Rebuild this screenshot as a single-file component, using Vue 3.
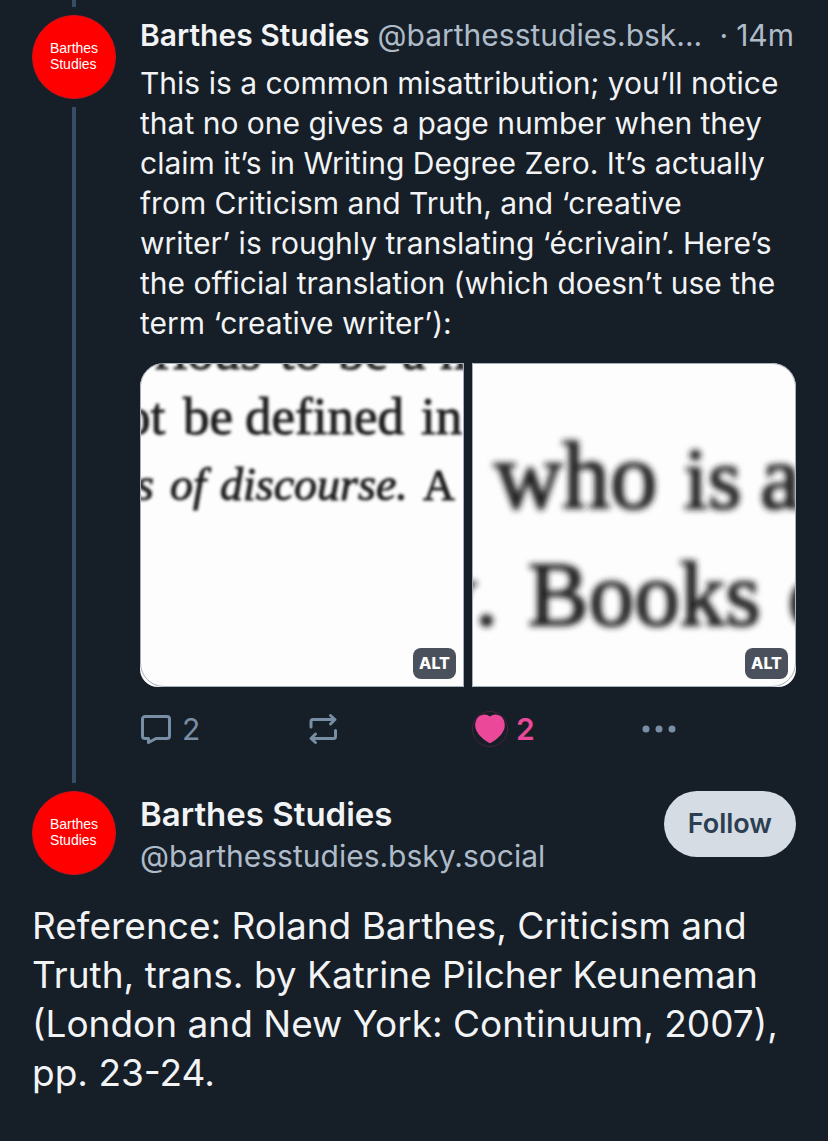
<script setup>
import { ref } from 'vue'

const name = 'Barthes Studies'
const handle = '@barthesstudies.bsky.social'
const liked = ref(true)
const scans = [
  {
    id: 'scan-left',
    alt: 'Scanned passage: not be defined in terms of discourse. A',
    blur: 1.5,
    stroke: 1,
    words: [
      { x: 15, y: 6, size: 53, text: 'rious' },
      { x: 140, y: 6, size: 53, text: 'to' },
      { x: 198, y: 6, size: 53, text: 'be' },
      { x: 262, y: 6, size: 53, text: 'a' },
      { x: 300, y: 6, size: 53, text: 'n' },
      { x: -16, y: 71, size: 53, text: 'ot' },
      { x: 43, y: 71, size: 53, text: 'be' },
      { x: 105, y: 71, size: 53, text: 'defined' },
      { x: 281, y: 71, size: 53, text: 'in' },
      { x: -4, y: 137, size: 46, text: 's', italic: true },
      { x: 30, y: 137, size: 46, text: 'of', italic: true },
      { x: 80, y: 137, size: 46, text: 'discourse.', italic: true },
      { x: 283, y: 137, size: 44, text: 'A' },
    ],
  },
  {
    id: 'scan-right',
    alt: 'Scanned passage: who is a. Books',
    blur: 3,
    stroke: 2,
    words: [
      { x: 22, y: 145, size: 95, text: 'who' },
      { x: 212, y: 145, size: 86, text: 'is' },
      { x: 288, y: 145, size: 92, text: 'a' },
      { x: -42, y: 262, size: 92, text: 'y' },
      { x: 3, y: 262, size: 92, text: '.' },
      { x: 56, y: 262, size: 91, text: 'Books' },
      { x: 316, y: 262, size: 91, text: 'o' },
    ],
  },
]
</script>

<template>
  <main class="thread">
    <article class="post">
      <div class="rail">
        <span class="line line-top"></span>
        <a class="avatar" href="#" aria-label="Barthes Studies profile"><span>Barthes<br>Studies</span></a>
        <span class="line line-rest"></span>
      </div>
      <div class="content">
        <header class="byline">
          <a class="name" href="#">{{ name }}</a>
          <a class="handle" href="#">@barthesstudies.bsk...</a>
          <span class="dot">·</span>
          <time class="time">14m</time>
        </header>
        <p class="text">This is a common misattribution; you’ll notice that no one gives a page number when they claim it’s in Writing Degree Zero. It’s actually from Criticism and Truth, and ‘creative<br>writer’ is roughly translating ‘écrivain’. Here’s the official translation (which doesn’t use the<br>term ‘creative writer’):</p>
        <div class="gallery">
          <figure v-for="scan in scans" :key="scan.id" class="scan">
            <svg viewBox="0 0 324 324" preserveAspectRatio="xMidYMid slice" role="img" :aria-label="scan.alt">
              <defs>
                <filter :id="scan.id" x="-20%" y="-20%" width="140%" height="140%">
                  <feGaussianBlur :stdDeviation="scan.blur" />
                </filter>
              </defs>
              <g :filter="`url(#${scan.id})`" class="ink" :stroke-width="scan.stroke">
                <text
                  v-for="(w, i) in scan.words"
                  :key="i"
                  :x="w.x"
                  :y="w.y"
                  :font-size="w.size"
                  :font-style="w.italic ? 'italic' : 'normal'"
                >{{ w.text }}</text>
              </g>
            </svg>
            <button class="alt" type="button">ALT</button>
          </figure>
        </div>
        <div class="actions">
          <button class="action" type="button" aria-label="Reply">
            <svg class="icon" viewBox="0 0 32 32"><path d="M5 3.500h22a2.500 2.500 0 0 1 2.500 2.500v17a2.500 2.500 0 0 1-2.500 2.500H16l-7.500 4v-4H5A2.500 2.500 0 0 1 2.500 23V6A2.500 2.500 0 0 1 5 3.500z" /></svg>
            <span>2</span>
          </button>
          <button class="action" type="button" aria-label="Repost">
            <svg class="icon" viewBox="0 0 32 32"><path d="M5 14V8.500a2 2 0 0 1 2-2H29M24.500 2.500l4.500 4-4.500 4.500M29.500 17.500v6a2 2 0 0 1-2 2H5.500M9.500 21l-4.500 4.500 4.500 4" /></svg>
          </button>
          <button class="action like" type="button" aria-label="Like" :aria-pressed="liked" @click="liked = !liked">
            <svg class="heart" viewBox="0 0 36 36"><circle cx="18" cy="18" r="17.500" /><path d="M18 5.500C21 3 25 2.800 28.500 5C32 7.500 33.500 12.500 32.500 17C31 23.500 24.500 28.500 19.500 31.500Q18 32.500 16.500 31.500C11.500 28.500 5 23.500 3.500 17C2.500 12.500 4 7.500 7.500 5C11 2.800 15 3 18 5.500z" /></svg>
            <span>2</span>
          </button>
          <button class="action" type="button" aria-label="More options">
            <svg class="dots" viewBox="0 0 40 32"><circle cx="8" cy="16" r="3.500" /><circle cx="21" cy="16" r="3.500" /><circle cx="34" cy="16" r="3.500" /></svg>
          </button>
        </div>
      </div>
    </article>

    <article>
      <header class="focus-head">
        <a class="avatar" href="#" aria-label="Barthes Studies profile"><span>Barthes<br>Studies</span></a>
        <div class="who">
          <a class="name big" href="#">{{ name }}</a>
          <a class="handle" href="#">{{ handle }}</a>
        </div>
        <button class="follow" type="button">Follow</button>
      </header>
      <p class="focus-text">Reference: Roland Barthes, Criticism and Truth, trans. by Katrine Pilcher Keuneman (London and New York: Continuum, 2007), pp. 23-24.</p>
    </article>
  </main>
</template>

<style>
body {
  background: #161e27;
}
</style>

<style scoped>
.thread {
  box-sizing: border-box;
  min-height: 100vh;
  padding: 0 32px 40px;
  background: #161e27;
  color: #f1f3f5;
  font-family: Inter, "Liberation Sans", sans-serif;
  font-size: 30px;
  line-height: 40px;
}
a {
  color: inherit;
  text-decoration: none;
}
button {
  padding: 0;
  border: 0;
  background: none;
  color: inherit;
  font: inherit;
  cursor: pointer;
}
p,
figure {
  margin: 0;
}
.post {
  display: flex;
  gap: 24px;
}
.rail {
  display: flex;
  flex-direction: column;
  align-items: center;
  gap: 8px;
  padding-bottom: 8px;
}
.line {
  width: 4px;
  background: #384d65;
}
.line-top {
  height: 7px;
}
.line-rest {
  flex: 1;
}
.avatar {
  display: flex;
  flex: none;
  box-sizing: border-box;
  align-items: center;
  justify-content: center;
  width: 84px;
  height: 84px;
  border: 1px solid #d01218;
  border-radius: 50%;
  background: #fe0000;
  color: #fff;
  font: 14px/16px "Liberation Sans", Arial, sans-serif;
}
.avatar span {
  padding-bottom: 2px;
}
.content {
  flex: 1;
  min-width: 0;
  padding-top: 15px;
}
.byline {
  display: flex;
  gap: 8px;
  padding: 0 2px 8px 0;
  white-space: nowrap;
}
.name {
  font-weight: 600;
}
.handle,
.dot,
.time {
  color: #aebbc9;
}
.byline .handle {
  overflow: hidden;
  text-overflow: ellipsis;
}
.dot {
  margin-left: auto;
}
.gallery {
  display: grid;
  grid-template-columns: 1fr 1fr;
  gap: 8px;
  padding-top: 20px;
}
.scan {
  position: relative;
  aspect-ratio: 1;
  overflow: hidden;
  background: #fdfdfd;
}
.scan::after {
  position: absolute;
  inset: 0;
  border: 1px solid #a4b0bd;
  content: "";
  pointer-events: none;
}
.scan:first-child {
  border-radius: 24px 0 0 18px;
}
.scan:last-child {
  border-radius: 0 24px 18px 0;
}
.scan:first-child::after {
  border-radius: 24px 0 0 24px;
}
.scan:last-child::after {
  border-radius: 0 24px 24px 0;
}
.scan svg {
  display: block;
  width: 100%;
  height: 100%;
}
.ink {
  fill: #1c1c1c;
  stroke: #1c1c1c;
  font-family: "Liberation Serif", "Times New Roman", serif;
}
.alt {
  position: absolute;
  right: 8px;
  bottom: 8px;
  width: 43px;
  height: 31px;
  border-radius: 8px;
  background: #4a515c;
  color: #fff;
  font-size: 16px;
  font-weight: 800;
  line-height: 31px;
}
.actions {
  display: grid;
  grid-template-columns: repeat(3, 1fr) 158px;
  align-items: center;
  padding: 22px 0 42px;
  color: #788ea5;
}
.action {
  display: flex;
  align-items: center;
  gap: 10px;
  height: 40px;
}
.icon {
  width: 32px;
  height: 32px;
  fill: none;
  stroke: currentColor;
  stroke-width: 3;
  stroke-linecap: round;
  stroke-linejoin: round;
}
.like {
  gap: 8px;
  color: #ec4899;
  font-weight: 600;
}
.heart {
  width: 36px;
  height: 36px;
  fill: currentColor;
}
.heart circle {
  fill: none;
  stroke: #47233c;
}
.dots {
  width: 40px;
  height: 32px;
  fill: currentColor;
}
.focus-head {
  display: flex;
  align-items: flex-start;
  gap: 24px;
}
.who {
  display: flex;
  flex: 1;
  flex-direction: column;
  gap: 2px;
  min-width: 0;
  padding-top: 3px;
}
.big {
  font-size: 33px;
}
.follow {
  height: 66px;
  padding: 0 24px;
  border-radius: 33px;
  background: #d6dce4;
  color: #2c3e51;
  font-size: 27px;
  font-weight: 600;
}
.focus-text {
  padding-top: 25px;
  font-size: 37px;
  line-height: 49px;
}
</style>
